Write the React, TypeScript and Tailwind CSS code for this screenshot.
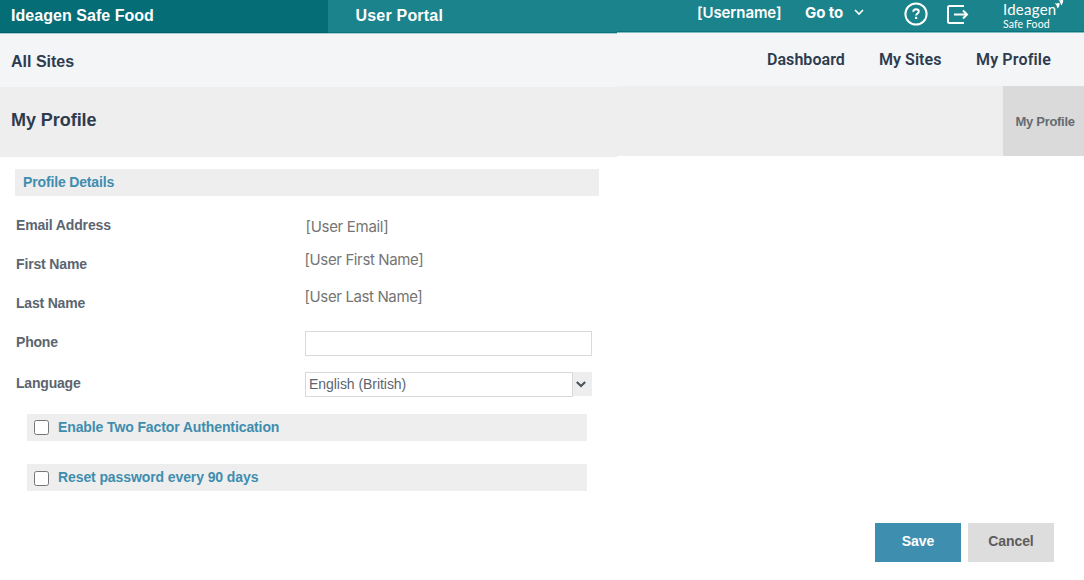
import type { ReactNode } from 'react'

const detailRows = [
  { label: 'Email Address', value: '[User Email]', labelClass: 'tracking-[-0.15px]', rowClass: 'h-[39px]', valueClass: 'pl-[0.5px] pt-[2px] tracking-[-0.3px]' },
  { label: 'First Name', value: '[User First Name]', labelClass: 'tracking-[-0.15px]', rowClass: 'h-[39px]', valueClass: '-ml-[0.5px] -mt-[4px] tracking-[-0.38px]' },
  { label: 'Last Name', value: '[User Last Name]', labelClass: 'tracking-[-0.2px]', rowClass: 'h-[39px]', valueClass: '-ml-[0.5px] -mt-[6px] tracking-[-0.38px]' },
]

const options = [
  { label: 'Enable Two Factor Authentication', labelClass: 'tracking-[-0.11px]', boxClass: '' },
  { label: 'Reset password every 90 days', labelClass: 'tracking-[-0.1px]', boxClass: 'mt-[2px]' },
]

function HelpIcon() {
  return (
    <svg className="size-6 shrink-0" viewBox="0 0 24 24" fill="none" stroke="currentColor">
      <circle cx="12" cy="12" r="10.6" strokeWidth="2" />
      <path d="M9.200 9.800c.1-1.700 1.200-2.600 2.800-2.600s2.800.9 2.800 2.300c0 1.900-2.700 2-2.700 4" strokeWidth="2" />
      <path d="M12.100 14.800v2.200" strokeWidth="2.200" />
    </svg>
  )
}

function LogoutIcon() {
  return (
    <svg className="h-[19px] w-[22px] shrink-0" viewBox="0 0 22 19" fill="none" stroke="currentColor" strokeWidth="2">
      <path d="M17 1H2.500Q1 1 1 2.500v14Q1 18 2.500 18H17" />
      <path d="M7 9.500h13" />
      <path d="m16 5.500 4 4-4 4" />
    </svg>
  )
}

function Logo() {
  return (
    <div className="relative w-[66px] font-['Lato'] font-normal text-white">
      <p className="text-[15px] leading-[18px] tracking-[0.25px]">Ideagen</p>
      <p className="text-[10.5px] leading-[12px] tracking-[0.1px]">Safe Food</p>
      <svg className="absolute left-[51px] -top-px h-[10px] w-[11px]" viewBox="0 0 11 10" fill="currentColor">
        <path d="M4.500 1Q6 1.800 9 .5Q9.800 4 7.200 6.500L6.500 4.300Q6 2.500 4.500 1Z" />
        <path d="M.5 4Q2.500 5 5.400 3.800Q6.200 7 3.500 9.600L2.900 7.400Q2.300 5.500 .5 4Z" />
      </svg>
    </div>
  )
}

function Band({ children, className = '' }: { children?: ReactNode; className?: string }) {
  return <div className={`flex ${className}`}>{children}</div>
}

export default function App() {
  return (
    <div className="h-[580px] w-[1084px] overflow-hidden bg-white font-['Liberation_Sans',sans-serif] text-[14px] font-bold text-[#5b656f]">
      <header className="flex h-[157px]">
        {/* Left side */}
        <div className="w-[617px]">
          <Band className="h-[33px] bg-[#1b838b] text-[16px] leading-[31px] text-white">
            <div className="w-[328px] border-b border-[#006069] bg-[#046d76] pl-[11px] tracking-[0.04px]">Ideagen Safe Food</div>
            <div className="flex-1 border-b border-[#0b737b] pl-[27.500px] tracking-[0.2px]">User Portal</div>
          </Band>
          <Band className="h-[54px] border-t border-[#a5cfd2] bg-[#f4f5f7] pl-[11px] text-[16px] leading-[55px] text-[#2d3b4e]">All Sites</Band>
          <Band className="h-[70px] bg-[#eeeeee] pl-[11px] text-[18px] leading-[66px] tracking-[-0.05px] text-[#2d3b4e]">My Profile</Band>
        </div>
        {/* Right side */}
        <div className="flex-1">
          <Band className="h-[32px] border-b border-[#0b737b] bg-[#1b838b] pl-[80px] text-white">
            <span className="w-[108px] font-['Inter'] text-[15px] font-semibold leading-[26px] tracking-[-0.1px]">[Username]</span>
            <span className="w-[49px] font-['Inter'] text-[15px] font-bold leading-[26px] tracking-[-0.1px]">Go to</span>
            <svg className="mt-[8px] mr-[40px] h-[8px] w-[10px]" viewBox="0 0 10 8" fill="none" stroke="currentColor" strokeWidth="1.700">
              <path d="m1 2 4 4 4-4" />
            </svg>
            <div className="mt-[2px] mr-[19px]"><HelpIcon /></div>
            <div className="mt-[5px] mr-[34px]"><LogoutIcon /></div>
            <Logo />
          </Band>
          <Band className="h-[54px] border-t border-[#7fbcc0] bg-[#f4f5f7] pl-[150px] font-['Roboto'] text-[16px] font-semibold leading-[54px] tracking-[0.05px] text-[#2d3b4e]">
            <span className="w-[112px]">Dashboard</span>
            <span className="w-[97px]">My Sites</span>
            <span className="tracking-[0.15px]">My Profile</span>
          </Band>
          <Band className="h-[70px] justify-end bg-[#eeeeee]">
            <div className="w-[81px] bg-[#dadada] pl-[12.500px] text-[13px] leading-[71px] tracking-[-0.3px] text-[#646b72]">My Profile</div>
          </Band>
        </div>
      </header>

      <main className="pl-[15px] pt-[12px]">
        <h2 className="h-[27px] w-[584px] bg-[#eeeeee] pl-[8px] leading-[27px] tracking-[-0.15px] text-[#3e8dae]">Profile Details</h2>

        <div className="mt-[19px]">
          {detailRows.map(row => (
            <div key={row.label} className={`flex pl-px leading-[20px] ${row.rowClass}`}>
              <span className={`w-[289px] ${row.labelClass}`}>{row.label}</span>
              <span className={`font-['Inter'] text-[15px] font-normal text-[#757575] ${row.valueClass}`}>{row.value}</span>
            </div>
          ))}
          <div className="flex h-[41px] pl-px leading-[20px]">
            <span className="w-[289px] tracking-[-0.2px]">Phone</span>
            <input className="-mt-px h-[25px] w-[287px] border border-[#d9d9d9] bg-white" />
          </div>
          <div className="flex h-[41px] pl-px leading-[20px]">
            <span className="w-[289px] tracking-[-0.2px]">Language</span>
            <div className="-mt-px flex h-[25px] w-[287px]">
              <div className="w-[268px] border border-[#d9d9d9] pl-[3px] font-normal leading-[23px] tracking-[-0.05px]">English (British)</div>
              <div className="flex h-[24px] flex-1 items-center bg-[#eeeeee] pl-[3px]">
                <svg className="h-[7px] w-[10px]" viewBox="0 0 10 7" fill="none" stroke="#4b5560" strokeWidth="2.200">
                  <path d="m.8 1 4.200 4 4.200-4" />
                </svg>
              </div>
            </div>
          </div>
        </div>

        <div className="ml-[12px] flex w-[560px] flex-col gap-[23px]">
          {options.map(option => (
            <label key={option.label} className="flex h-[27px] items-center bg-[#eeeeee] pl-[7px] text-[#3e8dae]">
              <input
                type="checkbox"
                className={`mr-[9px] size-[15px] appearance-none rounded-[2.5px] border border-[#767676] bg-white ${option.boxClass}`}
              />
              <span className={option.labelClass}>{option.label}</span>
            </label>
          ))}
        </div>

        {/* Actions */}
        <div className="mt-[32px] flex justify-end gap-[7px] pr-[30px]">
          <button className="h-[39px] w-[86px] bg-[#3d8eaf] pb-[2px] tracking-[-0.1px] text-white">Save</button>
          <button className="h-[39px] w-[86px] bg-[#dddddd] pb-[2px] tracking-[-0.1px] text-[#5c5c5c]">Cancel</button>
        </div>
      </main>
    </div>
  )
}
